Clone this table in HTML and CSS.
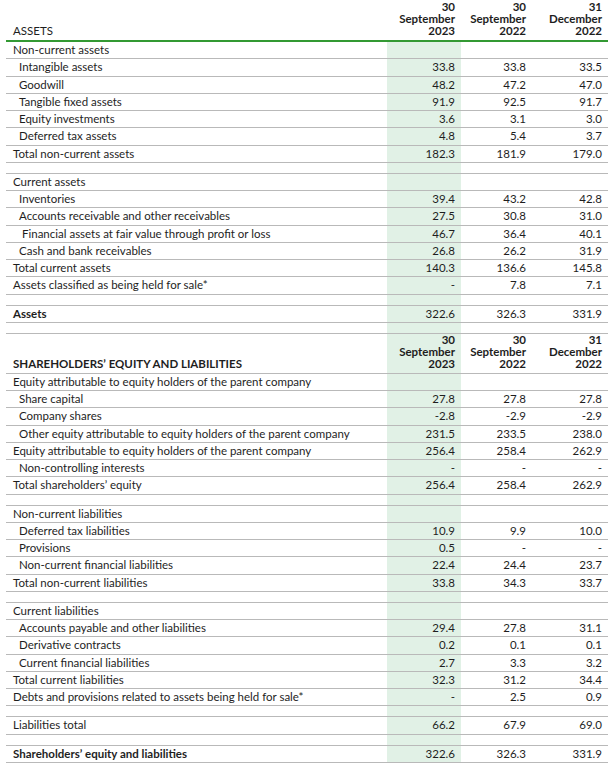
FILE: index.html
```html
<!DOCTYPE html>
<html>
<head>
<meta charset="utf-8">
<link rel="stylesheet" href="styles.css">
</head>
<body>
<table class="bs">
  <colgroup>
    <col class="c-label"><col class="c-cur"><col class="c-n"><col class="c-n3">
  </colgroup>
  <tr class="head head-first">
    <th class="lbl">ASSETS</th>
    <th class="num">30<br>September<br>2023</th>
    <th class="num">30<br>September<br>2022</th>
    <th class="num">31<br>December<br>2022</th>
  </tr>
  <tr><td class="lbl">Non-current assets</td><td class="num cur"></td><td class="num"></td><td class="num"></td></tr>
  <tr><td class="lbl ind">Intangible assets</td><td class="num cur">33.8</td><td class="num">33.8</td><td class="num">33.5</td></tr>
  <tr><td class="lbl ind">Goodwill</td><td class="num cur">48.2</td><td class="num">47.2</td><td class="num">47.0</td></tr>
  <tr><td class="lbl ind">Tangible fixed assets</td><td class="num cur">91.9</td><td class="num">92.5</td><td class="num">91.7</td></tr>
  <tr><td class="lbl ind">Equity investments</td><td class="num cur">3.6</td><td class="num">3.1</td><td class="num">3.0</td></tr>
  <tr><td class="lbl ind">Deferred tax assets</td><td class="num cur">4.8</td><td class="num">5.4</td><td class="num">3.7</td></tr>
  <tr><td class="lbl">Total non-current assets</td><td class="num cur">182.3</td><td class="num">181.9</td><td class="num">179.0</td></tr>
  <tr class="sp"><td></td><td class="cur"></td><td></td><td></td></tr>
  <tr><td class="lbl">Current assets</td><td class="num cur"></td><td class="num"></td><td class="num"></td></tr>
  <tr><td class="lbl ind">Inventories</td><td class="num cur">39.4</td><td class="num">43.2</td><td class="num">42.8</td></tr>
  <tr><td class="lbl ind">Accounts receivable and other receivables</td><td class="num cur">27.5</td><td class="num">30.8</td><td class="num">31.0</td></tr>
  <tr><td class="lbl ind2">Financial assets at fair value through profit or loss</td><td class="num cur">46.7</td><td class="num">36.4</td><td class="num">40.1</td></tr>
  <tr><td class="lbl ind">Cash and bank receivables</td><td class="num cur">26.8</td><td class="num">26.2</td><td class="num">31.9</td></tr>
  <tr><td class="lbl">Total current assets</td><td class="num cur">140.3</td><td class="num">136.6</td><td class="num">145.8</td></tr>
  <tr><td class="lbl">Assets classified as being held for sale*</td><td class="num cur">-</td><td class="num">7.8</td><td class="num">7.1</td></tr>
  <tr class="sp"><td></td><td class="cur"></td><td></td><td></td></tr>
  <tr class="bold"><td class="lbl">Assets</td><td class="num cur">322.6</td><td class="num">326.3</td><td class="num">331.9</td></tr>
  <tr class="sp"><td></td><td class="cur"></td><td></td><td></td></tr>
  <tr class="head head-second">
    <th class="lbl">SHAREHOLDERS’ EQUITY AND LIABILITIES</th>
    <th class="num cur">30<br>September<br>2023</th>
    <th class="num">30<br>September<br>2022</th>
    <th class="num">31<br>December<br>2022</th>
  </tr>
  <tr><td class="lbl">Equity attributable to equity holders of the parent company</td><td class="num cur"></td><td class="num"></td><td class="num"></td></tr>
  <tr><td class="lbl ind">Share capital</td><td class="num cur">27.8</td><td class="num">27.8</td><td class="num">27.8</td></tr>
  <tr><td class="lbl ind">Company shares</td><td class="num cur">-2.8</td><td class="num">-2.9</td><td class="num">-2.9</td></tr>
  <tr><td class="lbl ind">Other equity attributable to equity holders of the parent company</td><td class="num cur">231.5</td><td class="num">233.5</td><td class="num">238.0</td></tr>
  <tr><td class="lbl">Equity attributable to equity holders of the parent company</td><td class="num cur">256.4</td><td class="num">258.4</td><td class="num">262.9</td></tr>
  <tr><td class="lbl ind">Non-controlling interests</td><td class="num cur">-</td><td class="num">-</td><td class="num">-</td></tr>
  <tr><td class="lbl">Total shareholders’ equity</td><td class="num cur">256.4</td><td class="num">258.4</td><td class="num">262.9</td></tr>
  <tr class="sp"><td></td><td class="cur"></td><td></td><td></td></tr>
  <tr><td class="lbl">Non-current liabilities</td><td class="num cur"></td><td class="num"></td><td class="num"></td></tr>
  <tr><td class="lbl ind">Deferred tax liabilities</td><td class="num cur">10.9</td><td class="num">9.9</td><td class="num">10.0</td></tr>
  <tr><td class="lbl ind">Provisions</td><td class="num cur">0.5</td><td class="num">-</td><td class="num">-</td></tr>
  <tr><td class="lbl ind">Non-current financial liabilities</td><td class="num cur">22.4</td><td class="num">24.4</td><td class="num">23.7</td></tr>
  <tr><td class="lbl">Total non-current liabilities</td><td class="num cur">33.8</td><td class="num">34.3</td><td class="num">33.7</td></tr>
  <tr class="sp"><td></td><td class="cur"></td><td></td><td></td></tr>
  <tr><td class="lbl">Current liabilities</td><td class="num cur"></td><td class="num"></td><td class="num"></td></tr>
  <tr><td class="lbl ind">Accounts payable and other liabilities</td><td class="num cur">29.4</td><td class="num">27.8</td><td class="num">31.1</td></tr>
  <tr><td class="lbl ind">Derivative contracts</td><td class="num cur">0.2</td><td class="num">0.1</td><td class="num">0.1</td></tr>
  <tr><td class="lbl ind">Current financial liabilities</td><td class="num cur">2.7</td><td class="num">3.3</td><td class="num">3.2</td></tr>
  <tr><td class="lbl">Total current liabilities</td><td class="num cur">32.3</td><td class="num">31.2</td><td class="num">34.4</td></tr>
  <tr><td class="lbl">Debts and provisions related to assets being held for sale*</td><td class="num cur">-</td><td class="num">2.5</td><td class="num">0.9</td></tr>
  <tr class="sp"><td></td><td class="cur"></td><td></td><td></td></tr>
  <tr><td class="lbl">Liabilities total</td><td class="num cur">66.2</td><td class="num">67.9</td><td class="num">69.0</td></tr>
  <tr class="sp"><td></td><td class="cur"></td><td></td><td></td></tr>
  <tr class="bold"><td class="lbl">Shareholders’ equity and liabilities</td><td class="num cur">322.6</td><td class="num">326.3</td><td class="num">331.9</td></tr>
</table>
</body>
</html>
```
FILE: styles.css
```css
html, body {
  margin: 0;
  padding: 0;
  background: #ffffff;
}
body {
  font-family: Lato, "Liberation Sans", sans-serif;
  font-size: 11.5px;
  color: #1e1e1e;
}
.bs {
  margin-left: 6px;
  width: 602px;
  border-collapse: collapse;
  table-layout: fixed;
}
.c-label { width: 381px; }
.c-cur { width: 74px; }
.c-n { width: 71px; }
.c-n3 { width: 76px; }
.bs td, .bs th {
  padding: 0;
  height: 16.25px;
  border-bottom: 1px solid #b9b9b9;
  white-space: nowrap;
  line-height: 14px;
  vertical-align: middle;
}
.bs th { font-weight: 700; }
.lbl { text-align: left; padding-left: 7px !important; overflow: hidden; }
.ind { padding-left: 13px !important; }
.ind2 { padding-left: 16px !important; }
.num { text-align: right; padding-right: 6px !important; }
.cur { background: #e1f1e6; }
.head th {
  line-height: 12px;
  vertical-align: bottom;
}
.head-first th {
  height: 37px;
  padding-bottom: 3px;
  border-bottom: 2px solid #339933;
  font-weight: 700;
}
.head-first th.lbl { font-weight: 400; }
.head-second th {
  height: 34.5px;
  padding-bottom: 3px;
}
.sp td { height: 10px; }
.bold td { font-weight: 700; }
.bold td.num { font-weight: 400; }
```
